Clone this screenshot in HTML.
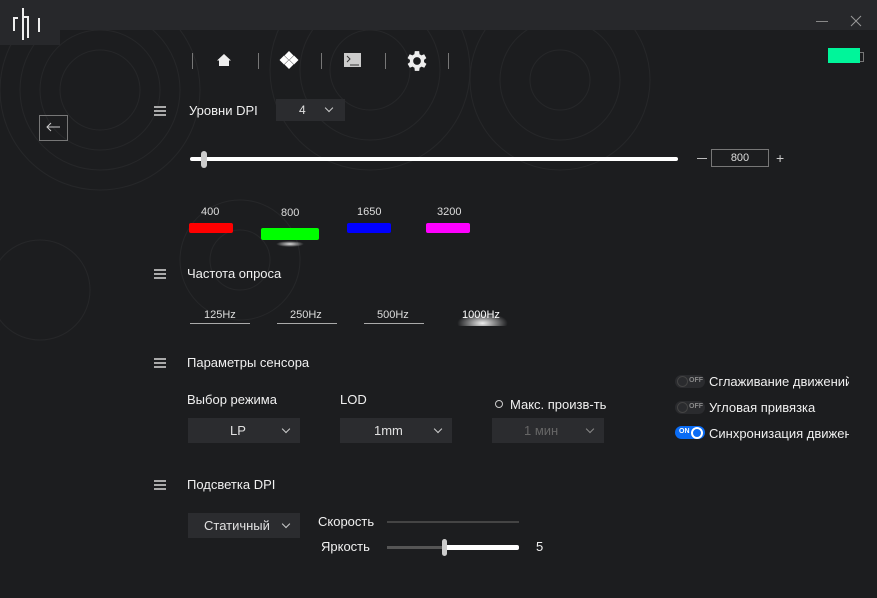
<!DOCTYPE html><html><head><meta charset="utf-8"><style>
body{margin:0;width:877px;height:598px;background:#1c1d1f;position:relative;overflow:hidden;font-family:"Liberation Sans","Noto Sans CJK SC",sans-serif;color:#e8e8e8}
.a{position:absolute}
.t{font-size:13px;color:#f0f0f0}
.s{font-size:11px;color:#ddd}
.dd{position:absolute;background:#2b2c2f;height:25px;font-size:13px;color:#e0e0e0;line-height:25px}
.ham{position:absolute;width:12px;height:8px;border-top:2px solid #aaa;border-bottom:2px solid #aaa;box-sizing:content-box;height:6px}
.ham:after{content:"";position:absolute;left:0;right:0;top:2px;border-top:2px solid #aaa}
.sep{position:absolute;width:1px;height:16px;background:#777;top:53px}
.chev{position:absolute;width:5px;height:5px;border-right:1px solid #ccc;border-bottom:1px solid #ccc;transform:rotate(45deg)}
.tg{position:absolute;width:30px;height:13px;border-radius:7px;background:#2a2b2e;left:675px}
.tg i{position:absolute;left:2px;top:1px;width:9px;height:9px;border:1px solid #444;border-radius:50%}
.tg b{position:absolute;left:14px;top:2px;font-size:7px;color:#888}
</style></head><body>
<svg class="a" style="left:0;top:30px;opacity:.045" width="877" height="568"><g fill="none" stroke="#fff" stroke-width="1">
<circle cx="100" cy="60" r="40"/><circle cx="100" cy="60" r="60"/><circle cx="100" cy="60" r="80"/><circle cx="100" cy="60" r="100"/>
<circle cx="370" cy="40" r="40"/><circle cx="370" cy="40" r="70"/><circle cx="370" cy="40" r="100"/>
<circle cx="560" cy="50" r="30"/><circle cx="560" cy="50" r="60"/><circle cx="560" cy="50" r="90"/>
<circle cx="240" cy="230" r="30"/><circle cx="240" cy="230" r="60"/><circle cx="40" cy="260" r="50"/></g></svg>
<div class="a" style="left:0;top:0;width:877px;height:30px;background:#27282b"></div>
<div class="a" style="left:0;top:0;width:60px;height:45px;background:#27282b"></div>
<svg class="a" style="left:10px;top:4px" width="34" height="36"><g fill="#eee"><rect x="3" y="13" width="2" height="14"/><rect x="3" y="13" width="5" height="2"/><rect x="12" y="4" width="2" height="32"/><rect x="17" y="12" width="2" height="22"/><rect x="14" y="12" width="5" height="2"/><rect x="28" y="14" width="2" height="14"/></g></svg>
<div class="a" style="left:816px;top:21px;width:12px;height:1px;background:#888"></div>
<svg class="a" style="left:850px;top:15px" width="12" height="12"><path d="M1 1L11 11M11 1L1 11" stroke="#999"/></svg>
<div class="sep" style="left:192px"></div><div class="sep" style="left:258px"></div><div class="sep" style="left:321px"></div><div class="sep" style="left:385px"></div><div class="sep" style="left:448px"></div>
<svg class="a" style="left:216px;top:52px" width="16" height="16"><path d="M8 2L1 8.5H3V14H13V8.5H15Z" fill="#eee"/></svg>
<svg class="a" style="left:279px;top:50px" width="20" height="20"><g fill="#fff"><path d="M10 1L14.5 5.5 10 10 5.5 5.5Z"/><path d="M10 10L14.5 14.5 10 19 5.5 14.5Z"/><path d="M5 6L9.5 10.5 5 15 0.5 10.5Z" transform="translate(0,-.5)"/><path d="M15 6L19.5 10.5 15 15 10.5 10.5Z" transform="translate(0,-.5)"/></g></svg>
<div class="a" style="left:344px;top:53px;width:17px;height:14px;background:#ccc"></div>
<svg class="a" style="left:346px;top:55px" width="14" height="12"><path d="M1 1L4 4 1 7" stroke="#333" fill="none"/><path d="M4 10H13" stroke="#333"/></svg>
<svg class="a" style="left:406px;top:50px" width="22" height="22" viewBox="2 2 20 20"><path fill="#eee" d="M19.4 13a7.5 7.5 0 000-2l2.1-1.6-2-3.5-2.5 1a7 7 0 00-1.7-1L15 3h-4l-.4 2.9a7 7 0 00-1.7 1l-2.5-1-2 3.5L6.6 11a7.5 7.5 0 000 2l-2.1 1.6 2 3.5 2.5-1a7 7 0 001.7 1L11 21h4l.4-2.9a7 7 0 001.7-1l2.5 1 2-3.5ZM13 15.5A3.5 3.5 0 1113 8.5a3.5 3.5 0 010 7Z" transform="translate(-1,0)"/></svg>
<div class="a" style="left:828px;top:48px;width:32px;height:15px;background:#00f59a"></div>
<div class="a" style="left:860px;top:52px;width:3px;height:8px;border:1px solid #777;border-left:none"></div>
<div class="a" style="left:39px;top:115px;width:27px;height:24px;border:1px solid #777"></div>
<svg class="a" style="left:45px;top:121px" width="16" height="12"><path d="M15 6H2M6 2L2 6 6 10" stroke="#ccc" fill="none"/></svg>
<div class="ham" style="left:154px;top:106px"></div>
<div class="a t" style="left:189px;top:103px">Уровни DPI</div>
<div class="dd" style="left:276px;top:99px;width:69px;height:22px;line-height:22px"><span style="position:absolute;left:23px;font-size:12px">4</span><div class="chev" style="left:50px;top:6px"></div></div>
<div class="a" style="left:190px;top:157px;width:488px;height:4px;background:#fff;border-radius:2px"></div>
<div class="a" style="left:201px;top:151px;width:6px;height:17px;background:#ccc;border-radius:3px"></div>
<div class="a" style="left:697px;top:158px;width:10px;height:1px;background:#bbb"></div>
<div class="a" style="left:711px;top:149px;width:56px;height:16px;border:1px solid #777;font-size:11px;text-align:center;line-height:16px;color:#ddd">800</div>
<div class="a" style="left:776px;top:150px;font-size:14px;color:#ccc">+</div>
<div class="a s" style="left:201px;top:206px">400</div><div class="a" style="left:189px;top:223px;width:44px;height:10px;background:#f00;border-radius:2px"></div>
<div class="a s" style="left:281px;top:207px">800</div><div class="a" style="left:261px;top:228px;width:58px;height:12px;background:#0f0;border-radius:2px"></div>
<div class="a" style="left:276px;top:241px;width:28px;height:6px;background:radial-gradient(ellipse,#ddd,transparent 70%)"></div>
<div class="a s" style="left:357px;top:206px">1650</div><div class="a" style="left:347px;top:223px;width:44px;height:10px;background:#00f;border-radius:2px"></div>
<div class="a s" style="left:437px;top:206px">3200</div><div class="a" style="left:426px;top:223px;width:44px;height:10px;background:#f0f;border-radius:2px"></div>
<div class="ham" style="left:154px;top:269px"></div>
<div class="a t" style="left:187px;top:266px">Частота опроса</div>
<div class="a s" style="left:204px;top:309px">125Hz</div><div class="a" style="left:190px;top:323px;width:60px;height:1px;background:#aaa"></div>
<div class="a s" style="left:290px;top:309px">250Hz</div><div class="a" style="left:277px;top:323px;width:60px;height:1px;background:#aaa"></div>
<div class="a s" style="left:377px;top:309px">500Hz</div><div class="a" style="left:364px;top:323px;width:60px;height:1px;background:#aaa"></div>
<div class="a" style="left:455px;top:312px;width:55px;height:14px;background:radial-gradient(ellipse at 50% 80%,#eee,transparent 65%)"></div>
<div class="a s" style="left:462px;top:309px;color:#fff">1000Hz</div>
<div class="ham" style="left:154px;top:358px"></div>
<div class="a t" style="left:187px;top:355px">Параметры сенсора</div>
<div class="a t" style="left:187px;top:392px">Выбор режима</div>
<div class="a t" style="left:340px;top:392px">LOD</div>
<div class="a" style="left:495px;top:400px;width:6px;height:6px;border:1px solid #ccc;border-radius:50%"></div>
<div class="a t" style="left:510px;top:397px">Макс. произв-ть</div>
<div class="dd" style="left:188px;top:418px;width:112px"><span style="position:absolute;left:42px">LP</span><div class="chev" style="left:95px;top:8px"></div></div>
<div class="dd" style="left:340px;top:418px;width:112px"><span style="position:absolute;left:34px">1mm</span><div class="chev" style="left:95px;top:8px"></div></div>
<div class="dd" style="left:492px;top:418px;width:112px;color:#666"><span style="position:absolute;left:32px">1 мин</span><div class="chev" style="left:95px;top:8px;border-color:#888"></div></div>
<div class="tg" style="top:375px"><i></i><b>OFF</b></div><div class="a t" style="left:709px;top:374px;width:140px;overflow:hidden;white-space:nowrap">Сглаживание движений</div>
<div class="tg" style="top:401px"><i></i><b>OFF</b></div><div class="a t" style="left:709px;top:400px">Угловая привязка</div>
<div class="tg" style="top:426px;background:#0a6cf5"><b style="left:4px;color:#fff">ON</b><i style="left:16px;border:2px solid #fff;width:8px;height:8px;top:0.5px"></i></div><div class="a t" style="left:709px;top:426px;width:140px;overflow:hidden;white-space:nowrap">Синхронизация движений</div>
<div class="ham" style="left:154px;top:480px"></div>
<div class="a t" style="left:187px;top:477px">Подсветка DPI</div>
<div class="dd" style="left:188px;top:513px;width:112px"><span style="position:absolute;left:16px">Статичный</span><div class="chev" style="left:95px;top:8px"></div></div>
<div class="a t" style="left:318px;top:514px">Скорость</div>
<div class="a" style="left:387px;top:521px;width:132px;height:2px;background:#444"></div>
<div class="a t" style="left:321px;top:539px">Яркость</div>
<div class="a" style="left:387px;top:546px;width:58px;height:3px;background:#555"></div>
<div class="a" style="left:445px;top:545px;width:74px;height:5px;background:#fff;border-radius:2px"></div>
<div class="a" style="left:442px;top:539px;width:5px;height:17px;background:#ccc;border-radius:3px"></div>
<div class="a t" style="left:536px;top:539px">5</div>
</body></html>
